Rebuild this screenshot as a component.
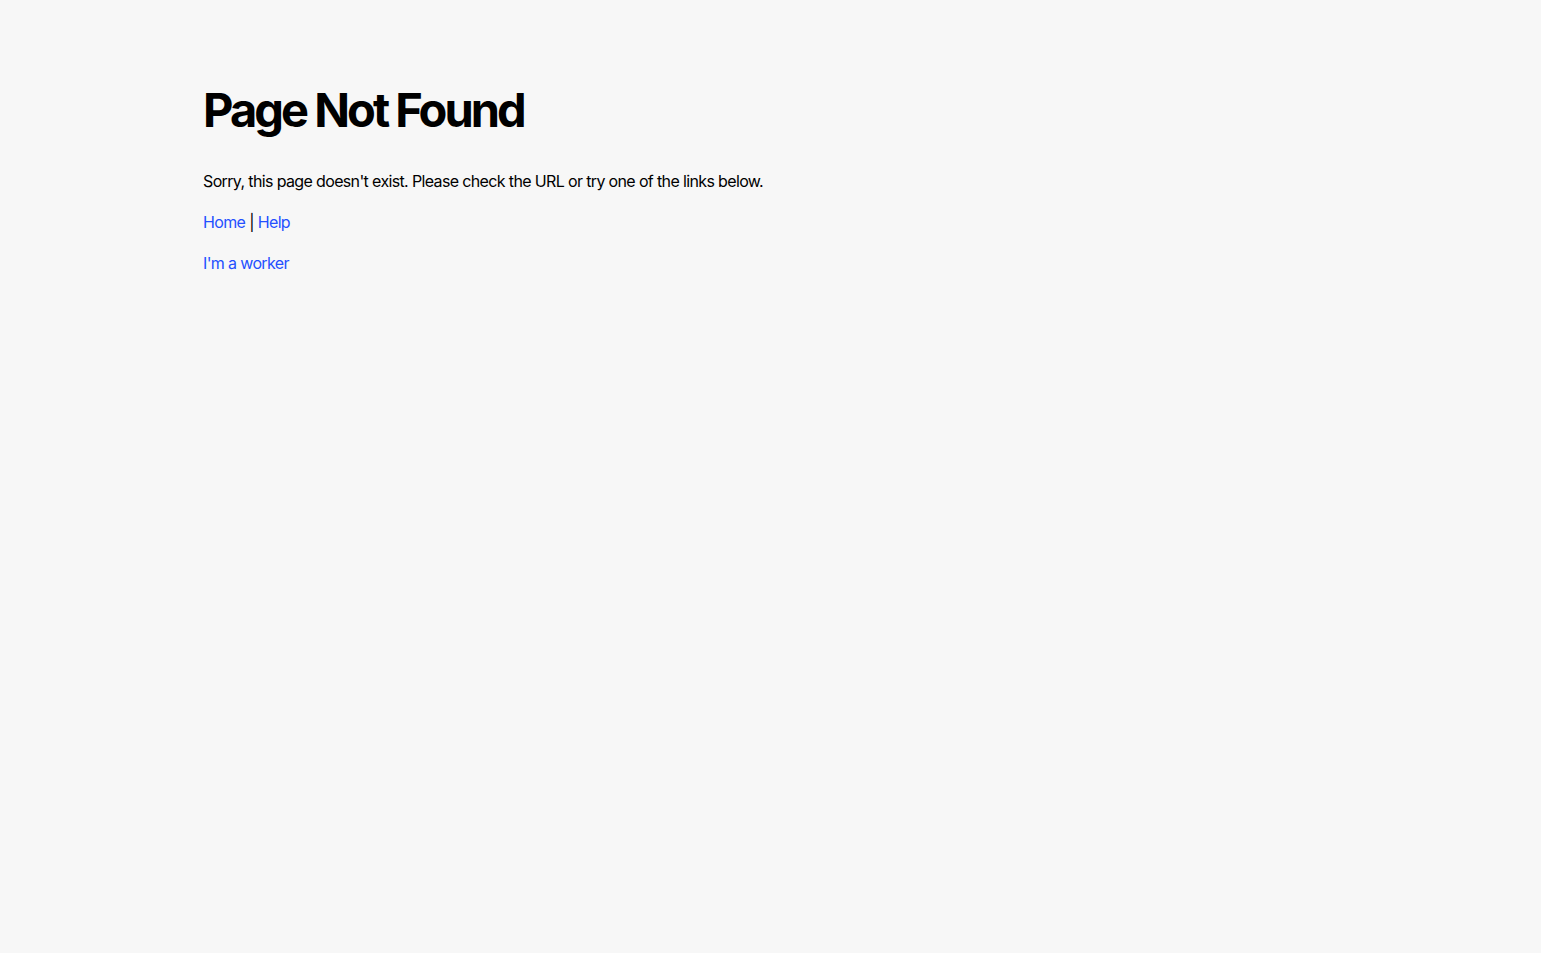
import React from 'react';

const App = () => {
    return (
        <div className="min-h-screen bg-[#f7f7f7] text-black" style={{ fontFamily: 'Inter, "Liberation Sans", sans-serif' }}>
            <div className="px-[203px] pt-[82px]">
                <h1 className="text-[47px] leading-[56px] font-bold tracking-[-0.063em]">Page Not Found</h1>

                <p className="mt-[31px] text-[16px] leading-[24px] tracking-[-0.04em]">
                    Sorry, this page doesn't exist. Please check the URL or try one of the links below.
                </p>

                <p className="mt-[17px] text-[16px] leading-[24px] tracking-[-0.04em]">
                    <a href="#" className="text-[#2450ff]">Home</a> | <a href="#" className="text-[#2450ff]">Help</a>
                </p>

                <p className="mt-[17px] text-[16px] leading-[24px] tracking-[-0.04em]">
                    <a href="#" className="text-[#2450ff]">I'm a worker</a>
                </p>
            </div>
        </div>
    );
};

export default App;
